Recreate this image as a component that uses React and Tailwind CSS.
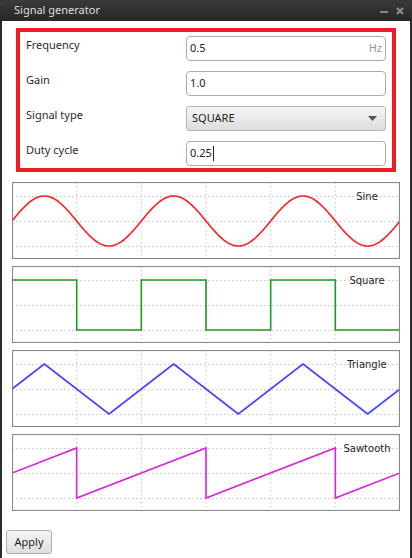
import React from "react";

const W = 388;
const H = 77;
const MID = 39;
const AMP = 25;
const PERIOD = W / 3;

function wavePoints(fn) {
  const pts = [];
  for (let i = 0; i <= 600; i++) {
    const x = (i / 600) * W;
    pts.push(`${x.toFixed(2)},${(MID - fn(x / PERIOD) * AMP).toFixed(2)}`);
  }
  return pts.join(" ");
}

const frac = (p) => p - Math.floor(p);

const charts = [
  {
    label: "Sine",
    color: "#ff1f1f",
    points: wavePoints((p) => Math.sin(2 * Math.PI * p)),
  },
  {
    label: "Square",
    color: "#1f9a1f",
    points: (() => {
      const pts = [];
      for (let k = 0; k < 6; k++) {
        const y = k % 2 === 0 ? MID - AMP : MID + AMP;
        pts.push(`${(k * W) / 6},${y}`, `${((k + 1) * W) / 6},${y}`);
      }
      return pts.join(" ");
    })(),
  },
  {
    label: "Triangle",
    color: "#4646ff",
    points: wavePoints((p) => {
      const f = frac(p + 0.25);
      return f < 0.5 ? -1 + 4 * f : 3 - 4 * f;
    }),
  },
  {
    label: "Sawtooth",
    color: "#dd22dd",
    points: (() => {
      const pts = [`0,${MID}`];
      for (let k = 0; k < 3; k++) {
        const xd = PERIOD * (k + 0.5);
        pts.push(`${xd},${MID - AMP}`, `${xd},${MID + AMP}`);
      }
      pts.push(`${W},${MID}`);
      return pts.join(" ");
    })(),
  },
];

function Chart({ label, color, points }) {
  return (
    <svg width={W} height={H} className="block">
      <rect x="0" y="0" width={W} height={H} fill="white" />
      {[1, 2, 3, 4, 5].map((k) => (
        <line key={k} x1={(k * W) / 6} x2={(k * W) / 6} y1="0" y2={H}
          stroke="#c4c4c4" strokeWidth="1" strokeDasharray="1.5 2.5" />
      ))}
      {[MID - AMP, MID, MID + AMP].map((y) => (
        <line key={y} x1="0" x2={W} y1={y + 0.5} y2={y + 0.5}
          stroke="#c4c4c4" strokeWidth="1" strokeDasharray="1.5 2.5" />
      ))}
      <polyline points={points} fill="none" stroke={color} strokeWidth="1.6"
        strokeLinejoin="miter" />
      <rect x="0.5" y="0.5" width={W - 1} height={H - 1} fill="none"
        stroke="#8a8a8a" strokeWidth="1.2" />
      <text x="355" y="18" textAnchor="middle" fontSize="10"
        fontFamily="'DejaVu Sans', sans-serif" fill="#222">{label}</text>
    </svg>
  );
}

function Field({ label, children }) {
  return (
    <div className="flex items-start h-[25px]">
      <span className="w-[160px] text-[11px] leading-[16px] pt-[1px] text-[#2a2a2a]">{label}</span>
      {children}
    </div>
  );
}

export default function App() {
  return (
    <div className="w-[412px] h-[558px] flex flex-col bg-[#2c2c2c] overflow-hidden"
      style={{ fontFamily: "'Noto Sans', 'Open Sans', sans-serif" }}>
      {/* title bar */}
      <div className="h-[21px] flex items-center pl-[14px] pr-[8px] bg-gradient-to-b from-[#3a3a3a] to-[#272727] rounded-t-[4px]">
        <span className="flex-1 text-[11px] text-[#dedede]">Signal generator</span>
        <span className="w-[8px] h-[2px] bg-[#8a8a8a] mr-[8px] mt-[2px]" />
        <svg width="8" height="8" viewBox="0 0 8 8" className="mt-[1px]">
          <path d="M1 1 L7 7 M7 1 L1 7" stroke="#8a8a8a" strokeWidth="2.2" />
        </svg>
      </div>

      {/* body */}
      <div className="flex-1 mx-[2px] bg-white flex flex-col">
        <div className="mt-[7px] ml-[14px] w-[380px] h-[144px] border-[4px] border-[#ee1c25] pl-[6px] pr-[6px] pt-[4px] flex flex-col gap-[10px]">
          <Field label="Frequency">
            <div className="w-[200px] h-[25px] border border-[#acacac] rounded-[4px] bg-white flex items-center px-[3px] text-[11px] text-[#222]">
              <span className="flex-1">0.5</span>
              <span className="text-[#9a9a9a]">Hz</span>
            </div>
          </Field>
          <Field label="Gain">
            <div className="w-[200px] h-[25px] border border-[#acacac] rounded-[4px] bg-white flex items-center px-[3px] text-[11px] text-[#222]">
              1.0
            </div>
          </Field>
          <Field label="Signal type">
            <div className="w-[200px] h-[25px] border border-[#b4b4b4] rounded-[3px] bg-gradient-to-b from-[#f5f5f5] to-[#dddddd] flex items-center pl-[5px] pr-[8px] text-[11px] text-[#222]">
              <span className="flex-1">SQUARE</span>
              <svg width="9" height="5" viewBox="0 0 9 5">
                <path d="M0 0 H9 L4.5 5 Z" fill="#555" />
              </svg>
            </div>
          </Field>
          <Field label="Duty cycle">
            <div className="w-[200px] h-[25px] border border-[#acacac] rounded-[4px] bg-white flex items-center px-[3px] text-[11px] text-[#222]">
              0.25<span className="w-[1px] h-[15px] bg-[#222] ml-[1px]" />
            </div>
          </Field>
        </div>

        <div className="mt-[10px] ml-[10px] flex flex-col gap-[7px]">
          {charts.map((c) => (
            <Chart key={c.label} {...c} />
          ))}
        </div>

        <div className="mt-[17px] ml-[4px]">
          <button className="w-[46px] h-[24px] border border-[#adadad] rounded-[3px] bg-gradient-to-b from-[#f6f6f6] to-[#dedede] text-[11px] text-[#1e1e1e] leading-none">
            Apply
          </button>
        </div>
      </div>
    </div>
  );
}
